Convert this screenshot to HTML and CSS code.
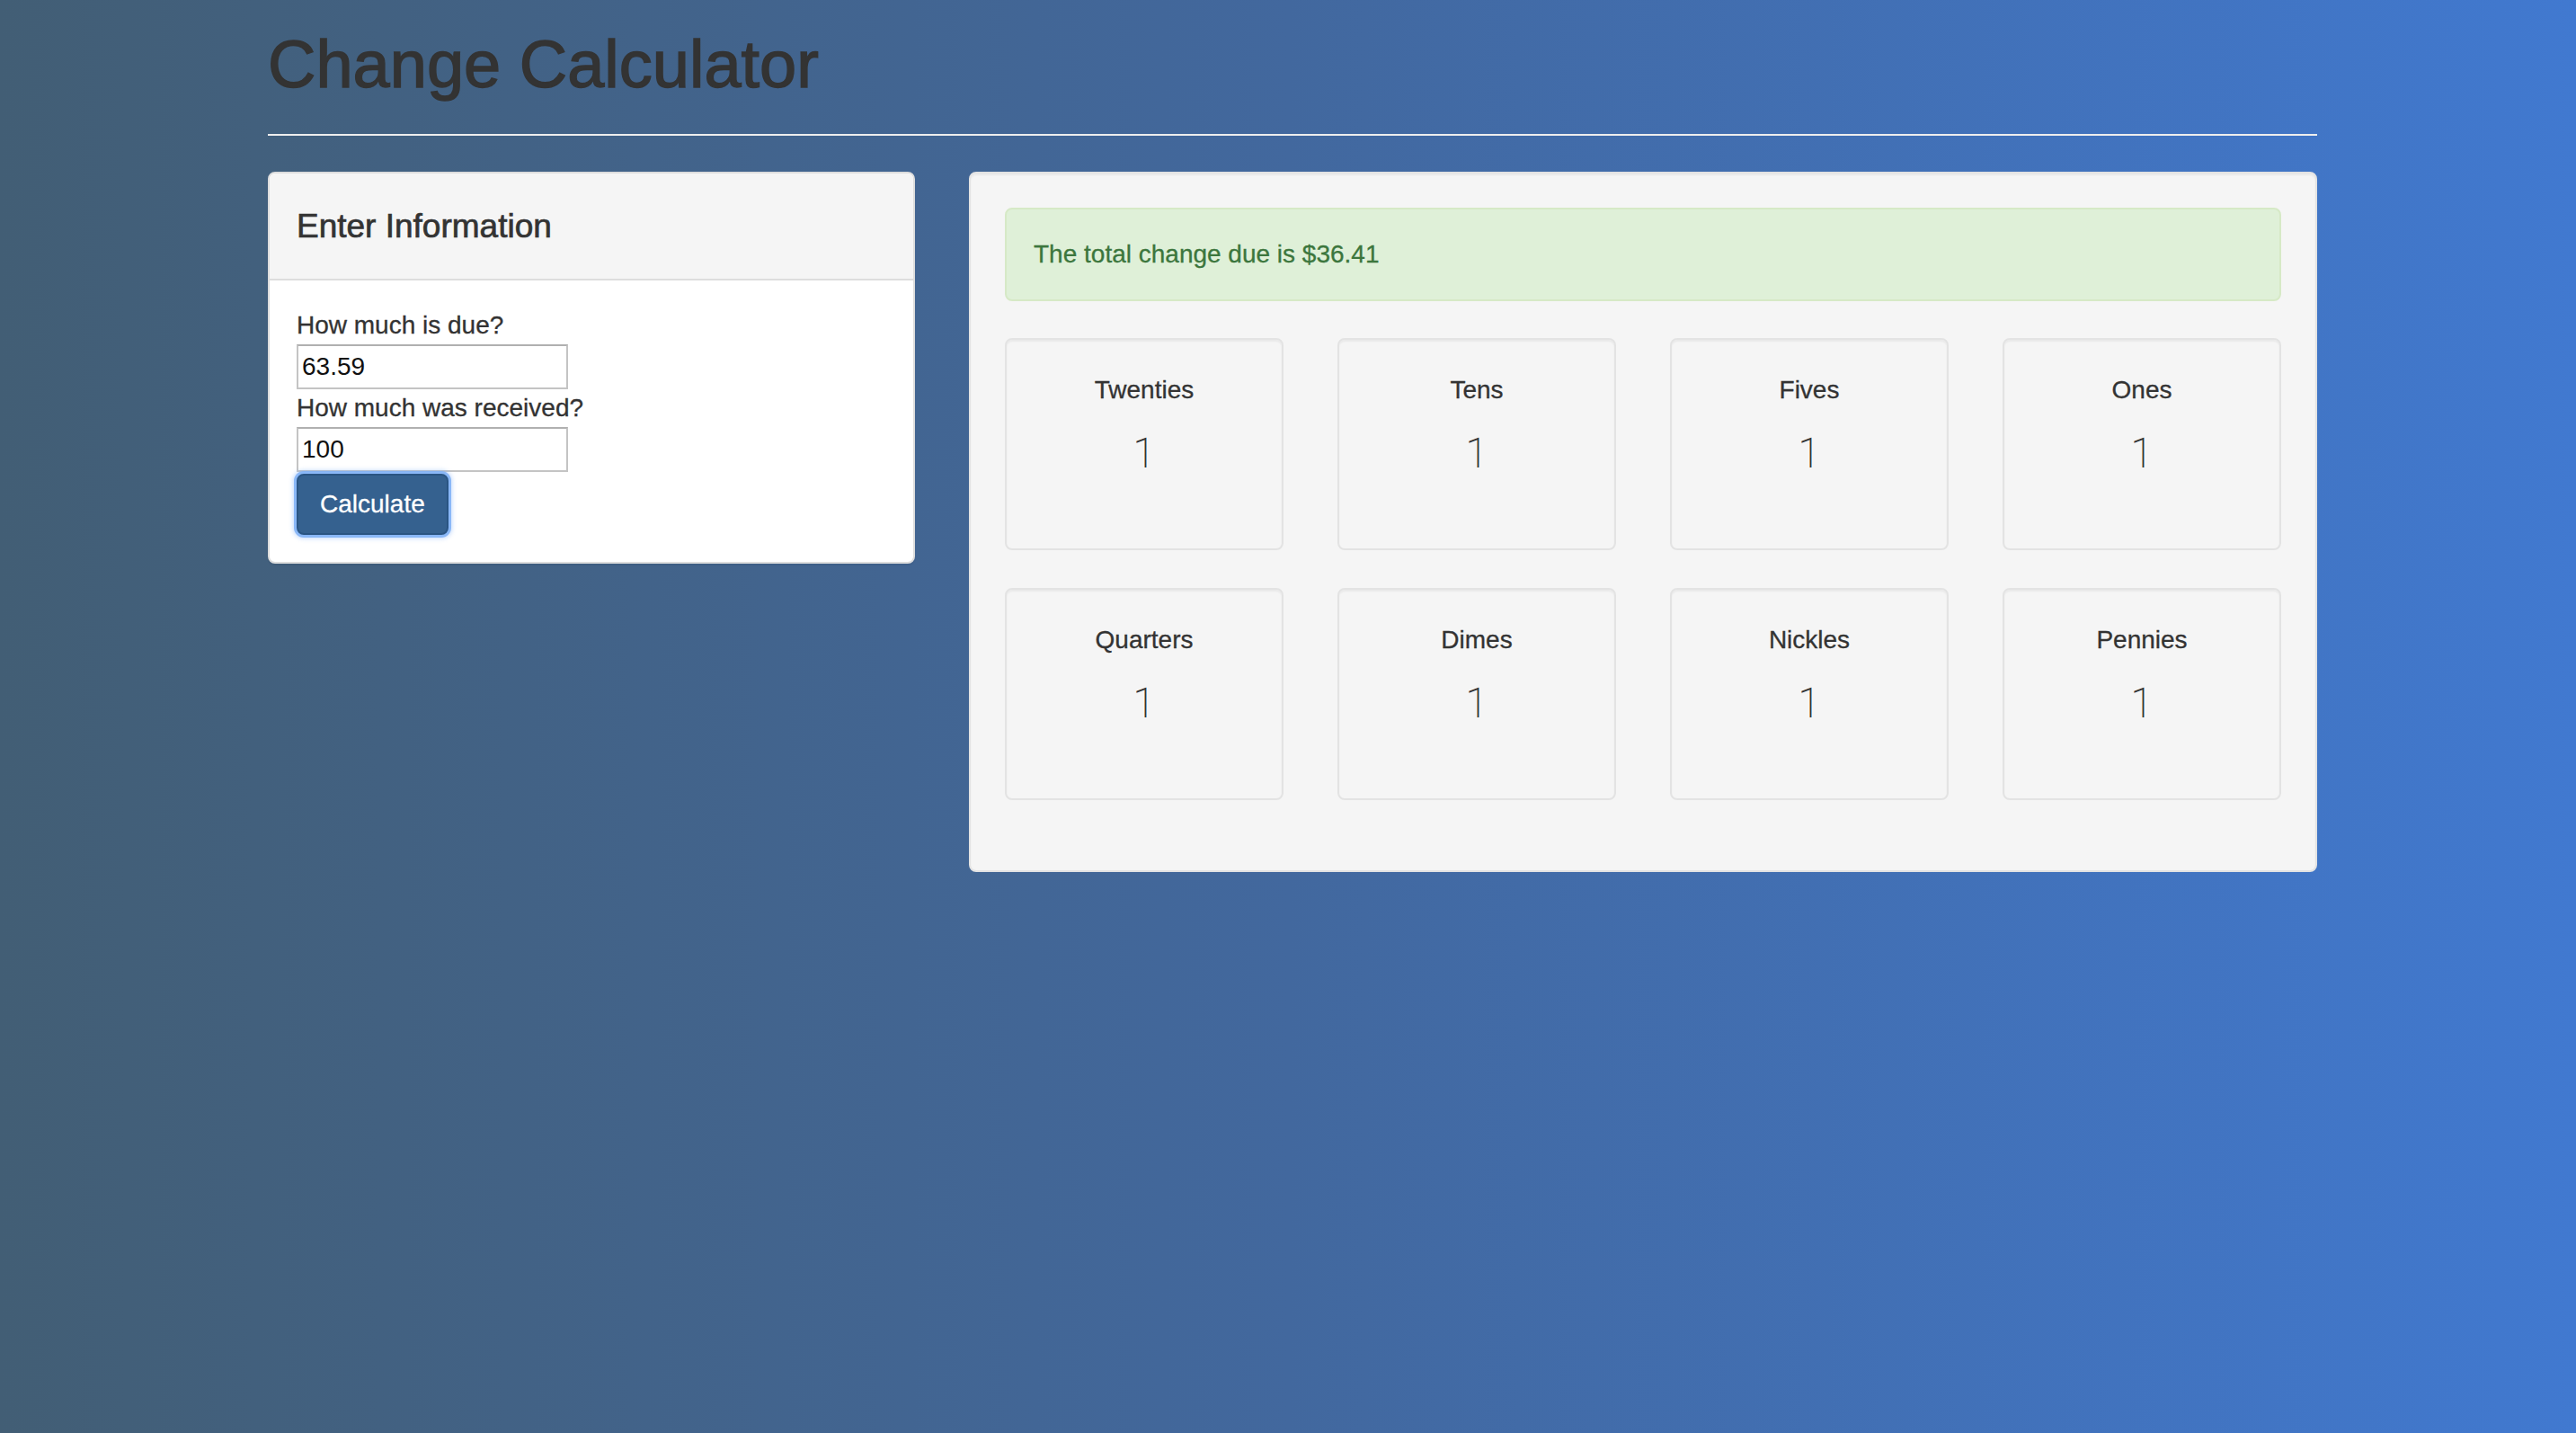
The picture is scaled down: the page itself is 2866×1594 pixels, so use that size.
FILE: index.html
```html
<!DOCTYPE html>
<html lang="en">
<head>
<meta charset="utf-8">
<title>Change Calculator</title>
<link rel="stylesheet" href="styles.css">
</head>
<body>
<div class="container">
  <header class="page-header">
    <h1>Change Calculator</h1>
  </header>
  <div class="row">
    <div class="col-left">
      <div class="panel">
        <div class="panel-heading">
          <h4 class="panel-title">Enter Information</h4>
        </div>
        <div class="panel-body">
          <label class="field-label" for="due">How much is due?</label>
          <input class="field-input" id="due" type="text" value="63.59">
          <label class="field-label" for="received">How much was received?</label>
          <input class="field-input" id="received" type="text" value="100">
          <button class="btn-primary" type="button">Calculate</button>
        </div>
      </div>
    </div>
    <div class="col-right">
      <div class="well">
        <div class="alert-success">The total change due is $36.41</div>
        <div class="money-grid">
          <div class="money-box"><div class="money-name">Twenties</div><div class="money-count">1</div></div>
          <div class="money-box"><div class="money-name">Tens</div><div class="money-count">1</div></div>
          <div class="money-box"><div class="money-name">Fives</div><div class="money-count">1</div></div>
          <div class="money-box"><div class="money-name">Ones</div><div class="money-count">1</div></div>
          <div class="money-box"><div class="money-name">Quarters</div><div class="money-count">1</div></div>
          <div class="money-box"><div class="money-name">Dimes</div><div class="money-count">1</div></div>
          <div class="money-box"><div class="money-name">Nickles</div><div class="money-count">1</div></div>
          <div class="money-box"><div class="money-name">Pennies</div><div class="money-count">1</div></div>
        </div>
      </div>
    </div>
  </div>
</div>
</body>
</html>
```

FILE: styles.css
```css
html, body {
  margin: 0;
  padding: 0;
}

body {
  min-height: 100vh;
  background: linear-gradient(to right, #425e75 0%, #42689e 50%, #4179d0 100%);
  font-family: "Liberation Sans", Arial, Helvetica, sans-serif;
  font-size: 28px;
  line-height: 40px;
  color: #333;
}

.container {
  width: 2280px;
  margin-left: 298px;
  padding-top: 32px;
}

.page-header {
  padding-bottom: 18px;
  border-bottom: 2px solid #eee;
  margin-bottom: 40px;
}

.page-header h1 {
  margin: 0 0 20px;
  font-size: 74px;
  line-height: 79px;
  font-weight: normal;
  color: #333;
  -webkit-text-stroke: 1.4px #333;
}

.row {
  display: flex;
  align-items: flex-start;
  gap: 60px;
}

.col-left {
  width: 720px;
}

.col-right {
  width: 1500px;
}

/* Panel */
.panel {
  background: #fff;
  border: 2px solid #ddd;
  border-radius: 8px;
  box-shadow: 0 2px 2px rgba(0, 0, 0, 0.05);
}

.panel-heading {
  background: #f5f5f5;
  border-bottom: 2px solid #ddd;
  border-radius: 6px 6px 0 0;
  padding: 20px 30px;
}

.panel-title {
  margin: 20px 0;
  font-size: 37px;
  line-height: 37px;
  font-weight: normal;
  color: #333;
  -webkit-text-stroke: 0.7px #333;
}

.panel-body {
  padding: 30px;
}

.field-label {
  display: block;
  line-height: 40px;
  -webkit-text-stroke: 0.3px #333;
}

.field-input {
  display: block;
  box-sizing: border-box;
  width: 302px;
  height: 50px;
  margin: 1px 0;
  padding: 0 4px;
  border: 2px solid #c4c4c4;
  border-top-color: #b0b0b0;
  background: #fff;
  font-family: "Liberation Sans", Arial, sans-serif;
  font-size: 28px;
  color: #111;
  outline: none;
}

.btn-primary {
  display: inline-block;
  margin-top: 1px;
  padding: 12px 24px;
  font-family: "Liberation Sans", Arial, sans-serif;
  font-size: 28px;
  line-height: 40px;
  color: #fff;
  background: #35618f;
  border: 2px solid #2a5583;
  border-radius: 8px;
  box-shadow: 0 0 0 3px rgba(126, 176, 246, 0.85), 0 0 5px 4px rgba(126, 176, 246, 0.45);
  cursor: pointer;
  -webkit-text-stroke: 0.3px #fff;
}

/* Well */
.well {
  background: #f5f5f5;
  border: 2px solid #e3e3e3;
  border-radius: 8px;
  padding: 38px;
  box-shadow: inset 0 2px 2px rgba(0, 0, 0, 0.05);
}

.alert-success {
  padding: 30px;
  margin-bottom: 41px;
  background: #dff0d8;
  border: 2px solid #d6e9c6;
  border-radius: 8px;
  color: #3c763d;
  line-height: 40px;
  -webkit-text-stroke: 0.3px #3c763d;
}

.money-grid {
  display: grid;
  grid-template-columns: repeat(4, 310px);
  column-gap: 60px;
  row-gap: 42px;
  margin-bottom: 40px;
}

.money-box {
  box-sizing: border-box;
  height: 236px;
  padding-top: 36px;
  background: #f5f5f5;
  border: 2px solid #e3e3e3;
  border-radius: 8px;
  box-shadow: inset 0 2px 2px rgba(0, 0, 0, 0.05);
  text-align: center;
}

.money-name {
  font-size: 28px;
  line-height: 40px;
  color: #333;
  -webkit-text-stroke: 0.3px #333;
}

.money-count {
  margin-top: 22px;
  font-family: Roboto, "Liberation Sans", sans-serif;
  font-weight: 200;
  font-size: 46px;
  line-height: 56px;
  color: #333;
}
```
